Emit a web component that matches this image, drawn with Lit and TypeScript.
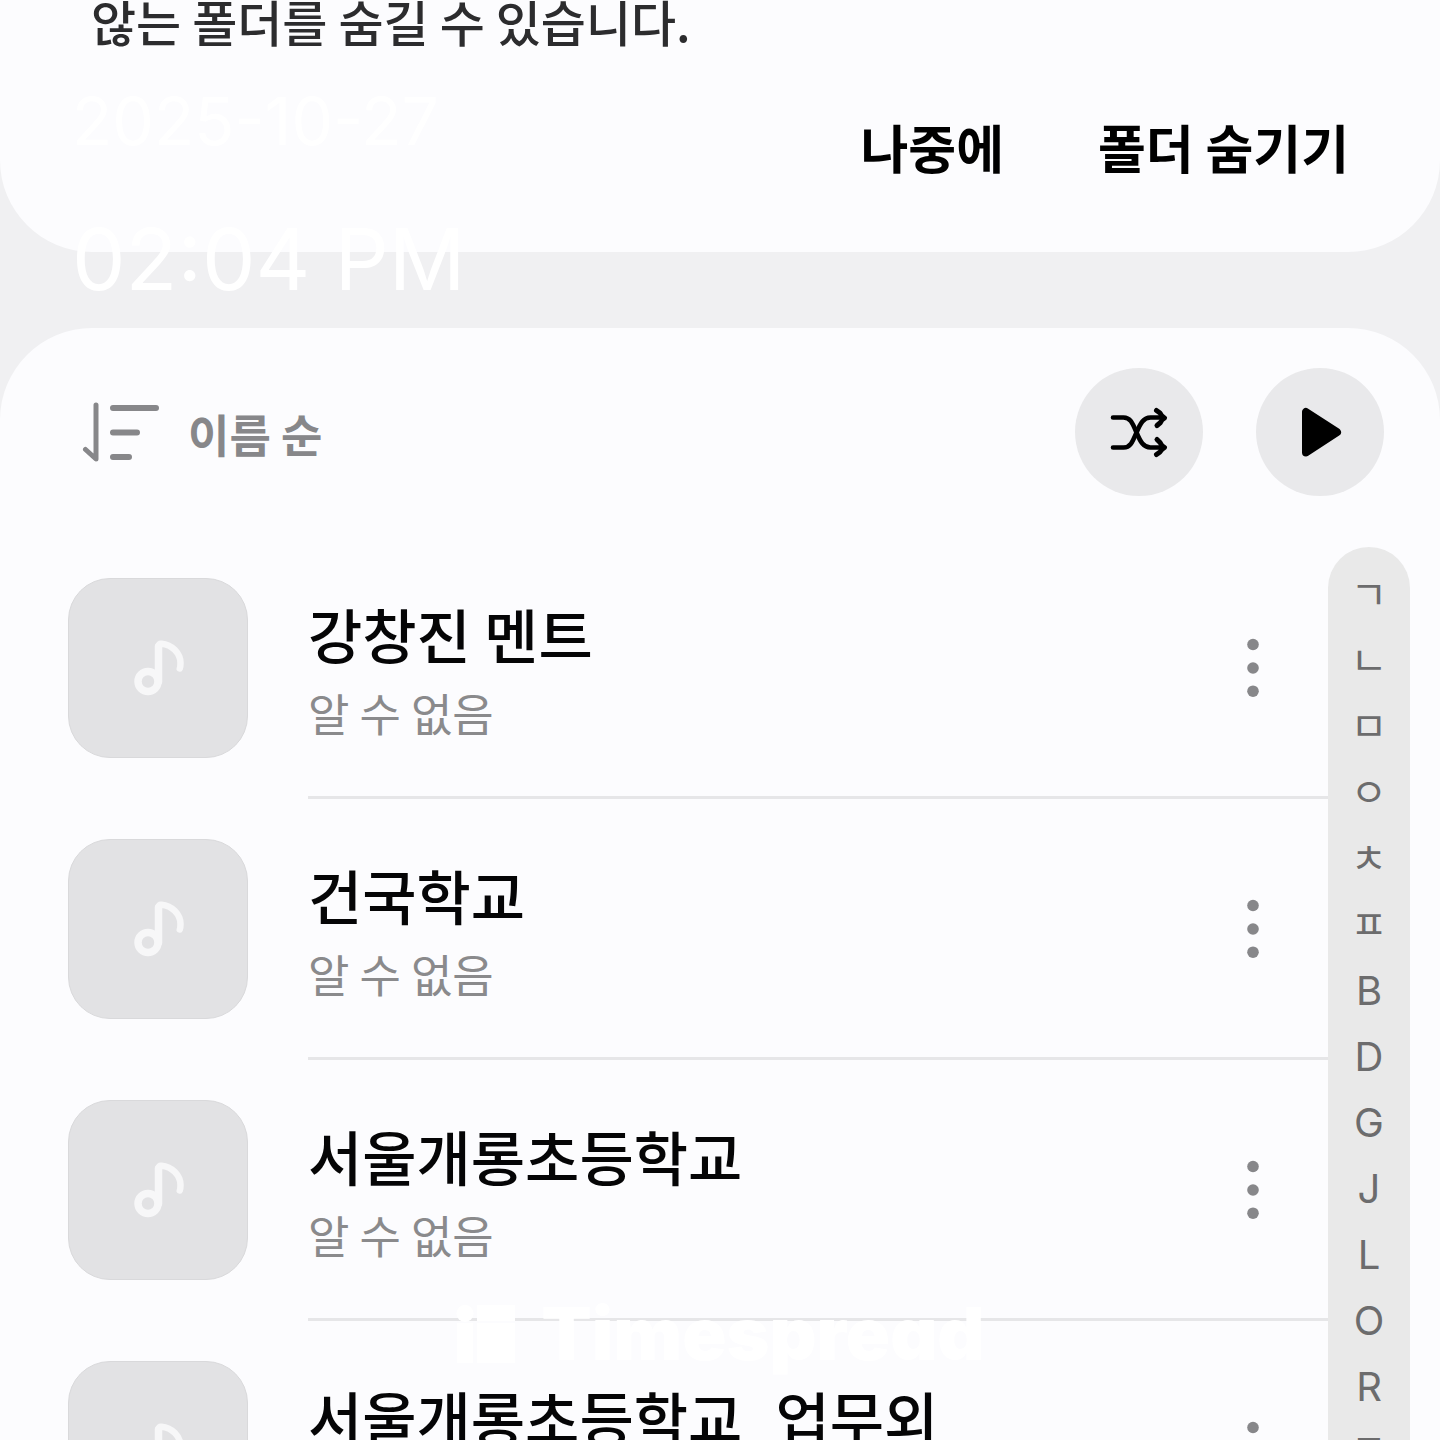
import { LitElement, html, css, svg } from "lit";
import { customElement, property } from "lit/decorators.js";

interface Track {
  title: string;
  artist: string;
}

const TRACKS: Track[] = [
  { title: "강창진 멘트", artist: "알 수 없음" },
  { title: "건국학교", artist: "알 수 없음" },
  { title: "서울개롱초등학교", artist: "알 수 없음" },
  { title: "서울개롱초등학교_업무외", artist: "알 수 없음" },
];

const INDEX = ["ㄱ", "ㄴ", "ㅁ", "ㅇ", "ㅊ", "ㅍ", "B", "D", "G", "J", "L", "O", "R", "T"];

const noteIcon = html`<svg width="52" height="58" viewBox="0 0 52 58" aria-hidden="true">
  ${svg`<g fill="none" stroke="#f7f7f8" stroke-linecap="round" stroke-linejoin="round">
    <circle cx="16" cy="42.500" r="10" stroke-width="7.500"/>
    <path d="M26.500 42.500V7.500Q26.500 4.500 29.500 4.700C40 5.500 48.500 14.500 48.500 24Q48.500 27.500 47.800 29.500" stroke-width="6.500"/>
    <path d="M26.500 42.500V7.500" stroke-width="7.500"/>
  </g>`}
</svg>`;

const sortIcon = html`<svg width="80" height="62" viewBox="0 0 80 62" aria-hidden="true">
  ${svg`<g fill="none" stroke="#87878a" stroke-linecap="round" stroke-linejoin="round">
    <path d="M14 4V58L3.500 48.500" stroke-width="5"/>
    <path d="M31 7H74M31 31.500H55M31 56H47" stroke-width="6"/>
  </g>`}
</svg>`;

const shuffleIcon = html`<svg width="60" height="52" viewBox="0 0 60 52" aria-hidden="true">
  ${svg`<g fill="none" stroke="#000" stroke-width="4.600" stroke-linecap="round" stroke-linejoin="round">
    <path d="M4 11.500H14.500C21.500 11.500 23.500 17 27.500 26.500S34.500 41.500 41.500 41.500H53"/>
    <path d="M4 41.500H14.500C21.500 41.500 23.500 36 27.500 26.500S34.500 11.500 41.500 11.500H53"/>
    <path d="M47.500 4.500L51 7Q52.500 10.500 55.500 12Q52.500 13.500 51.500 16.500L48 19.500" stroke-width="5"/>
    <path d="M48 33.500L51 36.500Q52.500 40 55.500 41.500Q52.500 43 51 46L47.500 48.500" stroke-width="5"/>
  </g>`}
</svg>`;

const playIcon = html`<svg width="44" height="52" viewBox="0 0 44 52" aria-hidden="true">
  ${svg`<path d="M8 6V46.500L39 26.200Z" fill="#000" stroke="#000" stroke-width="8" stroke-linejoin="round"/>`}
</svg>`;

const moreIcon = html`<svg width="12" height="60" viewBox="0 0 12 60" aria-hidden="true">
  ${svg`<g fill="#87878a"><circle cx="6" cy="7.500" r="5.800"/><circle cx="6" cy="31" r="5.800"/><circle cx="6" cy="54.200" r="5.800"/></g>`}
</svg>`;

const brandIcon = html`<svg width="60" height="58" viewBox="0 0 60 58" aria-hidden="true">
  ${svg`<g fill="#fff"><circle cx="9" cy="8.500" r="8.500"/><rect x="1" y="18" width="16" height="40"/><rect x="21" width="38" height="16"/><rect x="21" y="18" width="38" height="40"/></g>`}
</svg>`;

const base = css`
  * {
    box-sizing: border-box;
  }
  button {
    border: 0;
    padding: 0;
    background: none;
    font: inherit;
    color: inherit;
    cursor: pointer;
  }
  svg {
    display: block;
    flex: none;
  }
`;

@customElement("track-row")
class TrackRow extends LitElement {
  @property({ attribute: false }) track!: Track;

  static styles = [
    base,
    css`
      :host {
        display: flex;
        gap: 60px;
        padding-left: 68px;
      }
      .art {
        display: flex;
        align-items: center;
        justify-content: center;
        flex: none;
        width: 180px;
        height: 180px;
        margin-top: 40px;
        border: 1px solid #d9d9db;
        border-radius: 42px;
        background: #e2e2e4;
      }
      .line {
        display: flex;
        align-items: center;
        flex: 1;
        min-width: 0;
        height: 261px;
        padding-right: 59px;
        border-bottom: 3px solid #e6e6e8;
      }
      .text {
        flex: 1;
        min-width: 0;
        padding-top: 8px;
      }
      .title {
        margin: 0;
        font-size: 59px;
        line-height: 84px;
        font-weight: 500;
        color: #050506;
        white-space: nowrap;
      }
      .artist {
        margin: 0;
        font-size: 45px;
        line-height: 74px;
        color: #8a8a8c;
      }
      .more {
        display: flex;
        align-items: center;
        justify-content: center;
        width: 32px;
        height: 80px;
      }
    `,
  ];

  render() {
    return html`
      <div class="art">${noteIcon}</div>
      <div class="line">
        <div class="text">
          <h2 class="title">${this.track.title}</h2>
          <p class="artist">${this.track.artist}</p>
        </div>
        <button class="more" aria-label="더보기">${moreIcon}</button>
      </div>
    `;
  }
}

@customElement("app-root")
class AppRoot extends LitElement {
  static styles = [
    base,
    css`
      :host {
        display: flex;
        flex-direction: column;
        gap: 76px;
        position: relative;
        height: 100vh;
        overflow: hidden;
        background: #f0f0f2;
        font-family: "Noto Sans CJK KR", "Noto Sans", sans-serif;
      }
      .notice {
        flex: none;
        padding: 0 91px 65px;
        border-radius: 0 0 92px 92px;
        background: #fcfcfe;
      }
      .message {
        margin: 0;
        font-size: 49px;
        line-height: 42px;
        font-weight: 500;
        color: #2c2c2e;
      }
      .actions {
        display: flex;
        justify-content: flex-end;
        gap: 94px;
        padding-top: 65px;
        font-size: 52px;
        line-height: 80px;
        font-weight: 700;
        color: #000;
      }
      .library {
        flex: none;
        border-radius: 92px 92px 0 0;
        background: #fcfcfe;
      }
      .toolbar {
        display: flex;
        align-items: center;
        gap: 53px;
        padding: 40px 56px 42px 82px;
      }
      .sort {
        display: flex;
        align-items: center;
        gap: 26px;
        margin-right: auto;
        font-size: 45px;
        line-height: 64px;
        font-weight: 700;
        color: #87878a;
      }
      .sort span {
        padding-top: 3px;
      }
      .round {
        display: flex;
        align-items: center;
        justify-content: center;
        width: 128px;
        height: 128px;
        border-radius: 50%;
        background: #e9e9eb;
      }
      .content {
        display: flex;
        align-items: flex-start;
        padding-right: 30px;
      }
      .list {
        flex: 1;
        min-width: 0;
        margin: 0;
        padding: 0;
        list-style: none;
      }
      .index {
        display: flex;
        flex-direction: column;
        width: 82px;
        margin-top: 9px;
        padding: 15px 0;
        border-radius: 41px;
        background: #e9e9e9;
      }
      .letter {
        height: 66px;
        font-family: Inter, "Noto Sans CJK KR", sans-serif;
        font-size: 40px;
        line-height: 66px;
        text-align: center;
        text-decoration: none;
        color: #6c6c6d;
      }
      .clock {
        position: absolute;
        top: 80px;
        left: 72px;
        font-family: Inter, sans-serif;
        color: #fff;
        pointer-events: none;
      }
      .date {
        margin: 0;
        font-size: 66px;
        line-height: 82px;
      }
      .time {
        margin: 0;
        padding-top: 42px;
        font-size: 85px;
        line-height: 112px;
        font-weight: 400;
      }
      .brand {
        position: absolute;
        bottom: 70px;
        left: 0;
        right: 0;
        display: flex;
        align-items: center;
        justify-content: center;
        gap: 26px;
        font-family: Inter, sans-serif;
        font-size: 73px;
        line-height: 72px;
        font-weight: 900;
        font-feature-settings: "cv11";
        color: #fff;
        pointer-events: none;
      }
    `,
  ];

  render() {
    return html`
      <section class="notice">
        <p class="message">않는 폴더를 숨길 수 있습니다.</p>
        <div class="actions">
          <button>나중에</button>
          <button>폴더 숨기기</button>
        </div>
      </section>
      <section class="library">
        <div class="toolbar">
          <button class="sort">${sortIcon}<span>이름 순</span></button>
          <button class="round" aria-label="셔플">${shuffleIcon}</button>
          <button class="round" aria-label="재생">${playIcon}</button>
        </div>
        <div class="content">
          <ul class="list">
            ${TRACKS.map((t) => html`<li><track-row .track=${t}></track-row></li>`)}
          </ul>
          <nav class="index" aria-label="색인">
            ${INDEX.map((l) => html`<a class="letter" href="#${l}">${l}</a>`)}
          </nav>
        </div>
      </section>
      <div class="clock">
        <p class="date">2025-10-27</p>
        <p class="time">02:04 PM</p>
      </div>
      <div class="brand">${brandIcon}<span>Timespread</span></div>
    `;
  }
}
